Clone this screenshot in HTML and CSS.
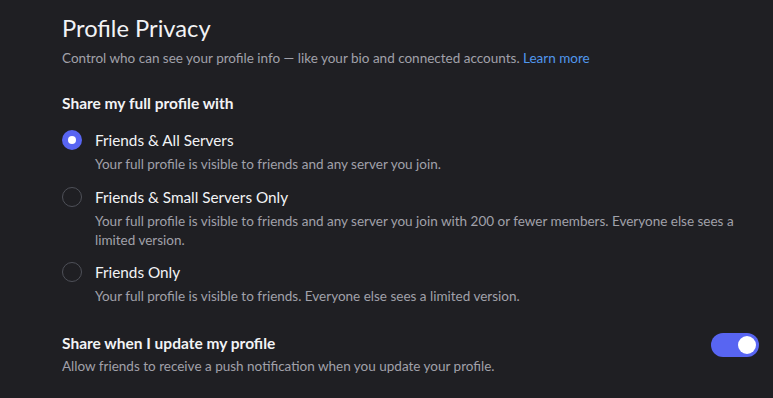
FILE: index.html
```html
<!DOCTYPE html>
<html>
<head>
    <title>Profile Privacy</title>
    <link rel="stylesheet" href="styles.css">
</head>
<body>
    <div class="container">
        <h1>Profile Privacy</h1>
        <p class="subtitle">Control who can see your profile info — like your bio and connected accounts. <a href="#">Learn more</a></p>

        <h2 class="section-title">Share my full profile with</h2>
        <div class="radio-group">
            <div class="radio-item">
                <span class="radio checked"></span>
                <div class="radio-text">
                    <div class="radio-label">Friends &amp; All Servers</div>
                    <div class="radio-desc">Your full profile is visible to friends and any server you join.</div>
                </div>
            </div>
            <div class="radio-item">
                <span class="radio"></span>
                <div class="radio-text">
                    <div class="radio-label">Friends &amp; Small Servers Only</div>
                    <div class="radio-desc">Your full profile is visible to friends and any server you join with 200 or fewer members. Everyone else sees a limited version.</div>
                </div>
            </div>
            <div class="radio-item">
                <span class="radio"></span>
                <div class="radio-text">
                    <div class="radio-label">Friends Only</div>
                    <div class="radio-desc">Your full profile is visible to friends. Everyone else sees a limited version.</div>
                </div>
            </div>
        </div>

        <div class="switch-row">
            <div class="switch-text">
                <h2 class="section-title">Share when I update my profile</h2>
                <div class="switch-desc">Allow friends to receive a push notification when you update your profile.</div>
            </div>
            <span class="switch on"><span class="knob"></span></span>
        </div>
    </div>
</body>
</html>
```

FILE: styles.css
```css
body {
    margin: 0;
    background-color: #1f1f23;
    font-family: Lato, sans-serif;
    color: #f2f3f5;
}

.container {
    width: 697px;
    padding: 13px 0 0 62px;
}

h1 {
    margin: 0;
    font-size: 23.7px;
    font-weight: 400;
    line-height: 30px;
    color: #f2f3f5;
}

.subtitle {
    margin: 5px 0 0;
    font-size: 13.5px;
    line-height: 20px;
    color: #a1a1aa;
}

.subtitle a {
    color: #5197ed;
    text-decoration: none;
}

.section-title {
    margin: 0;
    font-size: 15.5px;
    font-weight: 700;
    line-height: 20px;
    color: #f2f3f5;
}

.container > .section-title {
    margin-top: 25px;
}

.radio-group {
    margin-top: 17px;
}

.radio-item {
    display: flex;
    gap: 13px;
    margin-bottom: 12.5px;
}

.radio {
    flex: none;
    width: 20px;
    height: 20px;
    box-sizing: border-box;
    border: 1.5px solid #4e5058;
    border-radius: 50%;
}

.radio.checked {
    border: none;
    background-color: #5865f2;
    display: flex;
    align-items: center;
    justify-content: center;
}

.radio.checked::after {
    content: "";
    width: 8px;
    height: 8px;
    border-radius: 50%;
    background-color: #fff;
}

.radio-label {
    font-size: 15.3px;
    font-weight: 400;
    line-height: 20px;
}

.radio-desc,
.switch-desc {
    margin-top: 5px;
    font-size: 13.5px;
    line-height: 19px;
    color: #a1a1aa;
}

.switch-row {
    display: flex;
    justify-content: space-between;
    align-items: flex-start;
    margin-top: 27px;
}

.switch-desc {
    margin-top: 4px;
}

.switch {
    flex: none;
    width: 48px;
    height: 24px;
    border-radius: 12px;
    background-color: #5865f2;
    display: flex;
    align-items: center;
    justify-content: flex-end;
    padding: 0 3px;
    box-sizing: border-box;
    margin-top: 0;
}

.knob {
    width: 18px;
    height: 18px;
    border-radius: 50%;
    background-color: #fff;
}
```
